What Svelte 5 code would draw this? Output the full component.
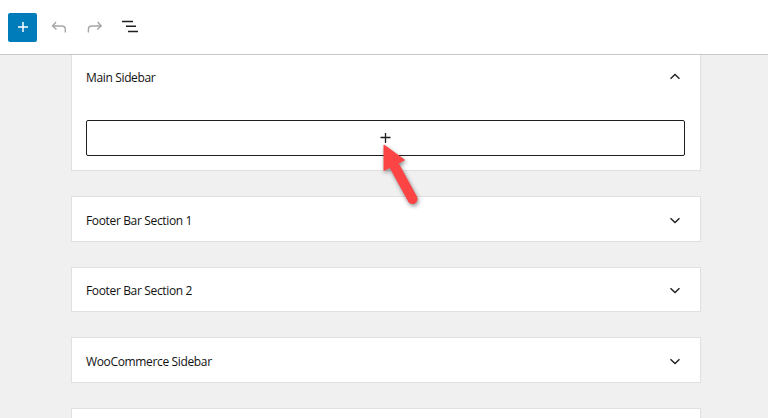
<script>
  const closedPanels = ['Footer Bar Section 1', 'Footer Bar Section 2', 'WooCommerce Sidebar'];
</script>

{#snippet chevron(up)}
  <svg class="chevron" viewBox="0 0 24 24" width="24" height="24">
    {#if up}
      <path d="M7.5 12.8 12 8.5l4.5 4.3" fill="none" stroke="#1e1e1e" stroke-width="1.4" />
    {:else}
      <path d="M16.5 10.3 12 14.6 7.5 10.3" fill="none" stroke="#1e1e1e" stroke-width="1.4" />
    {/if}
  </svg>
{/snippet}

<div class="page">
  <header class="toolbar">
    <button class="add" aria-label="Add block">
      <svg viewBox="0 0 24 24" width="24" height="24">
        <path d="M12 7v10M7 12h10" stroke="#fff" stroke-width="1.5" fill="none" />
      </svg>
    </button>
    <button class="tool" aria-label="Undo">
      <svg viewBox="0 0 24 24" width="24" height="24">
        <path d="M19.3 17.5v-3c0-2.2-1.5-3.5-3.7-3.5H6.8M10 7 6.5 11l4 3.5" fill="none" stroke="#a6a6a6" stroke-width="1.4" />
      </svg>
    </button>
    <button class="tool" aria-label="Redo">
      <svg viewBox="0 0 24 24" width="24" height="24">
        <path d="M6.4 17.5v-3c0-2.2 1.5-3.5 3.7-3.5h8.8M15.7 7l3.5 4-4 3.5" fill="none" stroke="#a6a6a6" stroke-width="1.4" />
      </svg>
    </button>
    <button class="tool" aria-label="List view">
      <svg viewBox="0 0 24 24" width="24" height="24">
        <path d="M4 6.5h11M8 11.25h10M10 16.5h10" fill="none" stroke="#1e1e1e" stroke-width="1.5" />
      </svg>
    </button>
  </header>

  <main class="content">
    <section class="panel open">
      <div class="panel-head">
        <span>Main Sidebar</span>
        {@render chevron(true)}
      </div>
      <div class="appender">
        <svg viewBox="0 0 24 24" width="24" height="24">
          <path d="M11.5 7v10M6.5 11.5h10" stroke="#1e1e1e" stroke-width="1.3" fill="none" />
        </svg>
      </div>
    </section>

    {#each closedPanels as title}
      <section class="panel">
        <div class="panel-head">
          <span>{title}</span>
          {@render chevron(false)}
        </div>
      </section>
    {/each}

    <section class="panel last"></section>
  </main>

  <svg class="arrow" viewBox="0 0 60 90" width="60" height="90">
    <path d="M25 27 42.5 59" stroke="#fd4444" stroke-width="10" stroke-linecap="round" fill="none" />
    <path d="M14 5 34.5 20 14 30.5Z" fill="#fd4444" stroke="#fd4444" stroke-width="1" stroke-linejoin="round" />
  </svg>
</div>

<style>
  :global(body) {
    background: #f0f0f0;
    font-family: "Open Sans", "Noto Sans", sans-serif;
    overflow: hidden;
  }
  .page {
    position: relative;
    height: 418px;
    overflow: hidden;
  }
  .toolbar {
    display: flex;
    align-items: center;
    height: 54px;
    padding-left: 8px;
    background: #fff;
    border-bottom: 1px solid #c8c8c8;
  }
  button {
    display: flex;
    align-items: center;
    justify-content: center;
    padding: 0;
    border: 0;
    background: none;
  }
  .add {
    width: 29px;
    height: 29px;
    background: #007cba;
    border-radius: 2px;
    margin-right: 3px;
  }
  .tool {
    width: 36px;
    height: 36px;
  }
  .content {
    display: flex;
    flex-direction: column;
    gap: 25px;
    width: 630px;
    margin-left: 71px;
  }
  .panel {
    background: #fff;
    border: 1px solid #e0e0e0;
    box-sizing: border-box;
    height: 45.5px;
    flex: none;
    padding: 0 15px 0 14px;
  }
  .panel.open {
    height: 116px;
    border-top: 0;
  }
  .panel-head {
    display: flex;
    align-items: center;
    justify-content: space-between;
    height: 43.5px;
    padding-top: 2px;
    box-sizing: border-box;
    font-size: 12px;
    letter-spacing: -0.35px;
    font-weight: 500;
    color: #111;
  }
  .panel-head span {
    padding-top: 1px;
  }
  .open .panel-head {
    height: 45px;
    padding-top: 0;
  }
  .open .panel-head span {
    padding-top: 0;
  }
  .chevron {
    margin-right: -1.5px;
  }
  .appender {
    display: flex;
    align-items: center;
    justify-content: center;
    height: 36px;
    margin-top: 20px;
    box-sizing: border-box;
    border: 1px solid #1e1e1e;
    border-radius: 2px;
  }
  .arrow {
    position: absolute;
    left: 370px;
    top: 140px;
    filter: drop-shadow(1px 2px 2px rgba(0, 0, 0, 0.45));
  }
</style>
